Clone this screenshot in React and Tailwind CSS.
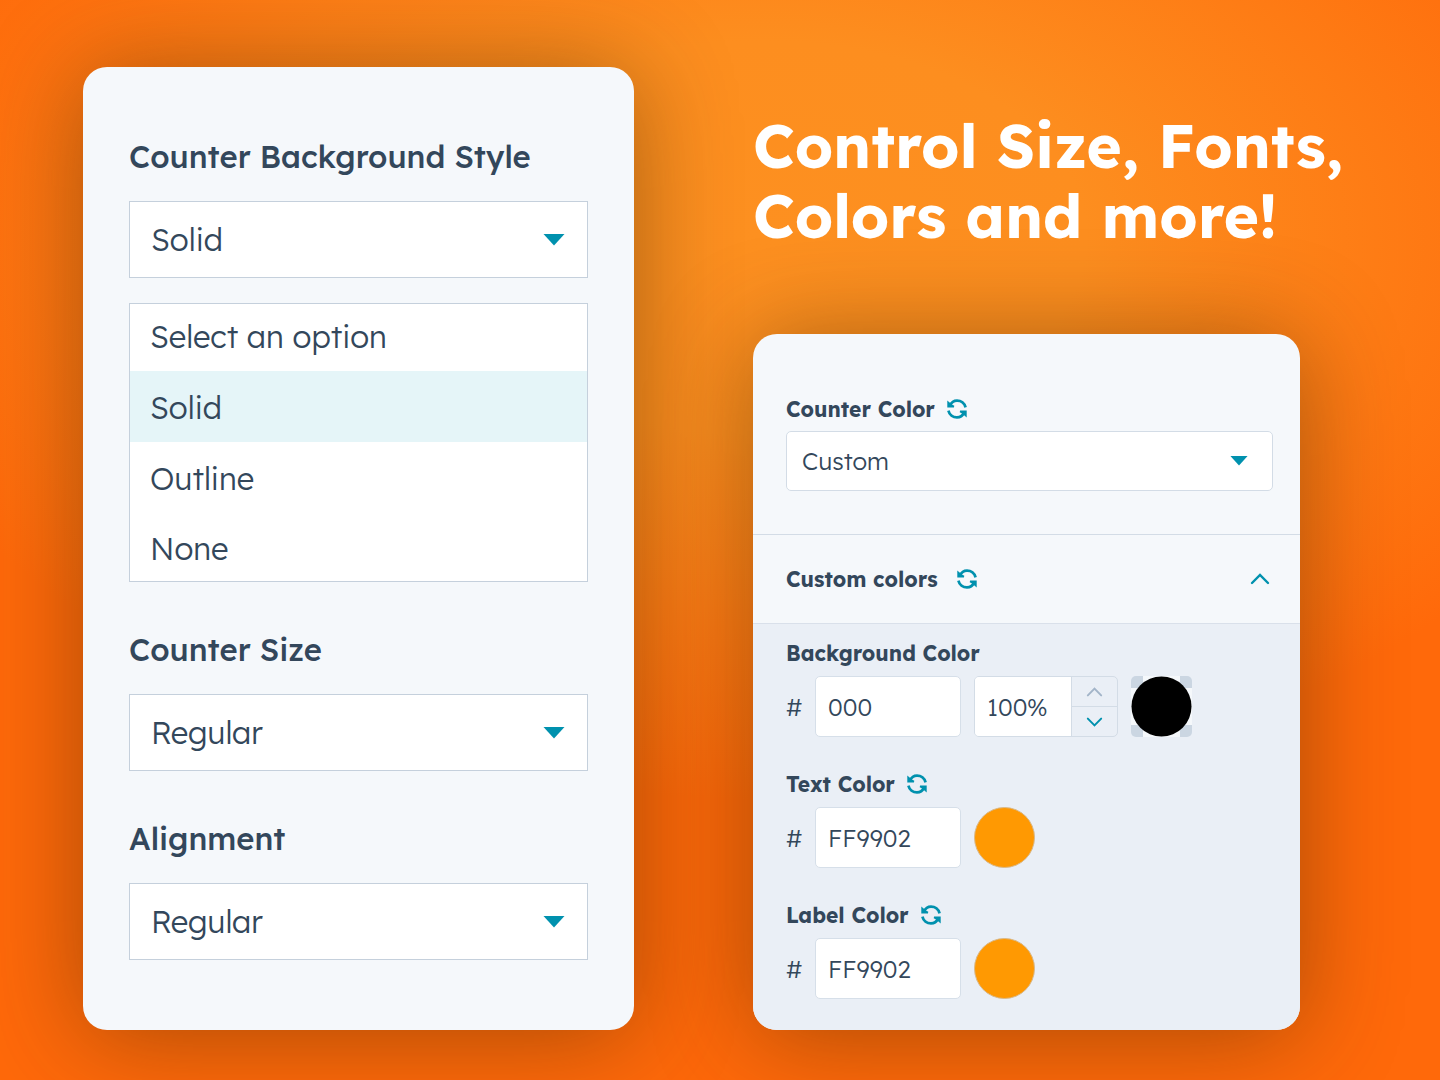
import React, { useState } from 'react';

const COLORS = [
  { id: 'text-color', label: 'Text Color' },
  { id: 'label-color', label: 'Label Color' },
];

const STYLES = ['Select an option', 'Solid', 'Outline', 'None'];

function Caret({ className }) {
  return (
    <svg viewBox="0 0 22 12" aria-hidden="true" className={`pointer-events-none absolute top-1/2 -translate-y-1/2 fill-[#0091ae] ${className}`}>
      <path d="M0.5 0h21L11 11.5z" />
    </svg>
  );
}

function Chevron({ down, className }) {
  return (
    <svg viewBox="0 0 20 12" fill="none" stroke="currentColor" strokeWidth="2.4" strokeLinecap="round" aria-hidden="true" className={className}>
      <path d={down ? 'M2 2l8 8 8-8' : 'M2 10l8-8 8 8'} />
    </svg>
  );
}

function RefreshButton({ label }) {
  return (
    <button type="button" aria-label={`Reset ${label}`} className="text-[#0091ae]">
      <svg viewBox="0 0 20 20" fill="none" className="size-5">
        <path d="M3 6.4C4.4 3.3 7 1.6 10 1.6c4 0 7.6 2.6 8.6 6.8" stroke="currentColor" strokeWidth="2.7" />
        <path d="M17 13.6c-1.4 3.1-4 4.8-7 4.8-4 0-7.6-2.6-8.600-6.8" stroke="currentColor" strokeWidth="2.7" />
        <path d="M0.3 1.5l2.3 2.1 2.4 1.9 2.3 1.3-.4 1.7H0.3z" fill="currentColor" />
        <path d="M19.7 18.5l-2.3-2.1-2.4-1.9-2.3-1.3.4-1.7h6.6z" fill="currentColor" />
      </svg>
    </button>
  );
}

function BigSelect({ id, label, options, value, onChange }) {
  return (
    <div>
      <label htmlFor={id} className="block text-[31px] leading-10 font-medium">{label}</label>
      <div className="relative mt-6">
        <select
          id={id}
          value={value}
          onChange={onChange}
          className="block h-[77px] w-full appearance-none border border-[#c5d0dc] bg-white px-[21px] pt-0.5 text-[31px] font-light focus:outline-none"
        >
          {options.map((o) => <option key={o}>{o}</option>)}
        </select>
        <Caret className="right-[23px] h-3 w-[22px]" />
      </div>
    </div>
  );
}

function HexField({ id, value, onChange }) {
  return (
    <>
      <span className="w-4 text-2xl font-light">#</span>
      <input
        id={id}
        value={value}
        onChange={onChange}
        className="h-[61px] w-[146px] rounded-[5px] border border-[#d6dfe9] bg-white px-3 text-2xl font-light focus:outline-none"
      />
    </>
  );
}

function ColorField({ id, label }) {
  const [hex, setHex] = useState('FF9902');

  return (
    <div>
      <div className="flex items-center gap-3">
        <label htmlFor={id} className="text-[21px] leading-7 font-bold">{label}</label>
        <RefreshButton label={label} />
      </div>
      <div className="mt-[9px] flex items-center gap-[13px]">
        <HexField id={id} value={hex} onChange={(e) => setHex(e.target.value)} />
        <button type="button" aria-label={`Pick ${label}`} className="size-[61px] rounded-full border border-[#d9b98a] bg-[#ff9902]" />
      </div>
    </div>
  );
}

function StylePanel() {
  const [style, setStyle] = useState('Solid');

  return (
    <section className="flex flex-col gap-12 rounded-3xl bg-[#f5f8fb] px-[46px] py-[70px] shadow-[0_6px_100px_rgba(70,40,0,0.47)]">
      <div>
        <BigSelect
          id="bg-style"
          label="Counter Background Style"
          options={STYLES}
          value={style}
          onChange={(e) => setStyle(e.target.value)}
        />
        <ul role="listbox" aria-label="Counter Background Style" className="mt-[25px] border border-[#c5d0dc] bg-white text-[31px] font-light">
          {STYLES.map((o) => (
            <li
              key={o}
              role="option"
              aria-selected={o === style}
              onClick={() => setStyle(o)}
              className={`flex h-[71px] cursor-pointer items-center px-5 pt-1 first:h-[67px] first:pt-0 last:h-[68px] ${o === style ? 'bg-[#e5f5f8]' : ''}`}
            >
              {o}
            </li>
          ))}
        </ul>
      </div>
      <BigSelect id="size" label="Counter Size" options={['Regular']} />
      <BigSelect id="alignment" label="Alignment" options={['Regular']} />
    </section>
  );
}

function ColorPanel() {
  const [bg, setBg] = useState('000');
  const [open, setOpen] = useState(true);

  return (
    <section className="mr-[57px] overflow-hidden rounded-3xl bg-[#f5f8fb] shadow-[0_6px_100px_rgba(70,40,0,0.47)]">
      <div className="border-b border-[#d3dce6] pt-[61px] pr-[27px] pb-[43px] pl-[33px]">
        <div className="flex items-center gap-3">
          <label htmlFor="counter-color" className="text-[21px] leading-7 font-bold">Counter Color</label>
          <RefreshButton label="Counter Color" />
        </div>
        <div className="relative mt-2">
          <select id="counter-color" className="block h-[60px] w-full appearance-none rounded-[5px] border border-[#d3dce6] bg-white px-[15px] text-2xl font-light focus:outline-none">
            <option>Custom</option>
          </select>
          <Caret className="right-[25px] h-[10px] w-[18px]" />
        </div>
      </div>

      <div className="flex h-[89px] items-center gap-[19px] border-b border-[#d9e0ea] pr-[30px] pl-[33px]">
        <h2 className="text-[21px] leading-7 font-bold">Custom colors</h2>
        <RefreshButton label="Custom colors" />
        <button type="button" aria-label="Toggle custom colors" onClick={() => setOpen(!open)} className="ml-auto text-[#0091ae]">
          <Chevron className="h-3 w-5" />
        </button>
      </div>

      {open && (
        <div className="flex flex-col gap-[33px] bg-[#eaeff6] px-[33px] pt-[15px] pb-[31px]">
          <div>
            <label htmlFor="bg-color" className="block text-[21px] leading-7 font-bold">Background Color</label>
            <div className="mt-[9px] flex items-center gap-[13px]">
              <HexField id="bg-color" value={bg} onChange={(e) => setBg(e.target.value)} />
              <div className="flex h-[61px] w-[144px] overflow-hidden rounded-[5px] border border-[#d3dce6]">
                <input
                  aria-label="Opacity"
                  defaultValue="100%"
                  className="w-24 min-w-0 bg-white pl-3 text-2xl font-light focus:outline-none"
                />
                <div className="flex flex-1 flex-col border-l border-[#d3dce6]">
                  <button type="button" aria-label="Increase opacity" className="flex flex-1 items-center justify-center border-b border-[#d3dce6] text-[#a3b5c9]">
                    <Chevron className="h-[10px] w-[17px]" />
                  </button>
                  <button type="button" aria-label="Decrease opacity" className="flex flex-1 items-center justify-center text-[#0091ae]">
                    <Chevron down className="h-[10px] w-[17px]" />
                  </button>
                </div>
              </div>
              <button type="button" aria-label="Pick Background Color" className="size-[61px]">
                <svg viewBox="0 0 61 61" className="size-full">
                  <rect width="61" height="61" rx="5" fill="#cbd6e2" />
                  <path d="M12 0h37v61H12zM0 12h61v37H0z" fill="#f5f8fb" />
                  <circle cx="30.5" cy="30.5" r="30" fill="#000" />
                </svg>
              </button>
            </div>
          </div>
          {COLORS.map((c) => <ColorField key={c.id} id={c.id} label={c.label} />)}
        </div>
      )}
    </section>
  );
}

function App() {
  return (
    <main className="grid min-h-screen grid-cols-[551fr_604fr] items-start gap-[119px] bg-[#ff690a] bg-[radial-gradient(ellipse_64%_52%_at_53%_22%,#fd9020_0%,#fd8e1f_35%,#ff690a_100%)] px-[83px] pt-[67px] pb-[50px] font-['Lexend','Inter',sans-serif] text-[#33475b]">
      <StylePanel />
      <div>
        <h1 className="mt-11 mb-[83px] text-[60px] leading-[70px] font-bold text-white">
          Control Size, Fonts, <br />
          Colors and more!
        </h1>
        <ColorPanel />
      </div>
    </main>
  );
}

export default App;
